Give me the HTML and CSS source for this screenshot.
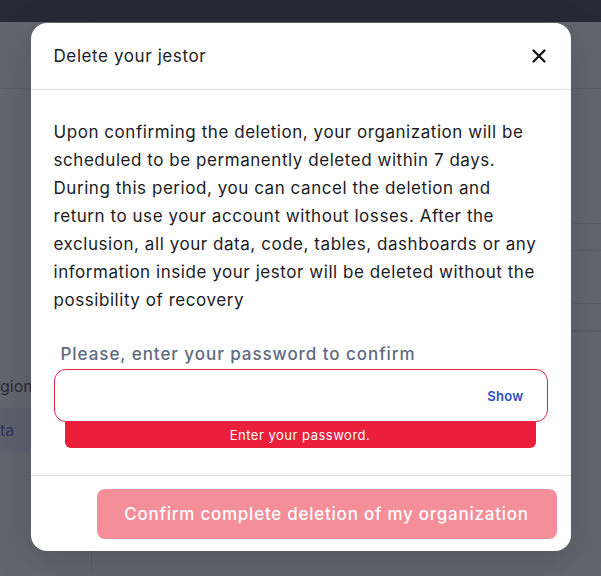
FILE: index.html
```html
<!DOCTYPE html>
<html>
<head>
<meta charset="utf-8">
<link rel="stylesheet" href="styles.css">
</head>
<body>
<div class="app">
  <div class="topbar"></div>
  <div class="main">
    <div class="side">
      <div class="side-head"></div>
      <div class="side-list">
        <div class="side-item">gion</div>
        <div class="side-item active">ta</div>
      </div>
    </div>
    <div class="content">
      <div class="content-head"></div>
      <div class="rows">
        <div class="row r1"></div>
        <div class="row r2"></div>
        <div class="row r3"></div>
        <div class="row r4"></div>
        <div class="row r5"></div>
      </div>
    </div>
  </div>
</div>
<div class="overlay">
  <div class="modal">
    <div class="modal-head">
      <h2 class="title">Delete your jestor</h2>
      <button class="close" aria-label="Close">
        <svg width="14" height="14" viewBox="0 0 14 14"><path d="M1.5 1.5 L12.5 12.5 M12.5 1.5 L1.5 12.5" stroke="#111" stroke-width="2.2" stroke-linecap="round"/></svg>
      </button>
    </div>
    <div class="modal-body">
      <p class="desc">Upon confirming the deletion, your organization will be scheduled to be permanently deleted within 7 days. During this period, you can cancel the deletion and return to use your account without losses. After the exclusion, all your data, code, tables, dashboards or any information inside your jestor will be deleted without the possibility of recovery</p>
      <label class="label">Please, enter your password to confirm</label>
      <div class="field">
        <input class="input" type="password">
        <span class="show">Show</span>
      </div>
      <div class="error">Enter your password.</div>
    </div>
    <div class="modal-foot">
      <button class="confirm">Confirm complete deletion of my organization</button>
    </div>
  </div>
</div>
</body>
</html>
```
FILE: styles.css
```css
* { box-sizing: border-box; }
html, body { margin: 0; padding: 0; }
body {
  width: 601px;
  height: 576px;
  overflow: hidden;
  font-family: "Inter", "Noto Sans", sans-serif;
  position: relative;
  background: #fff;
}
.app { display: flex; flex-direction: column; height: 576px; }
.topbar { height: 22px; background: #2b2e38; flex: none; }
.main { flex: 1; display: flex; }
.side { width: 92px; border-right: 1px solid #e2e4ea; display: flex; flex-direction: column; }
.side-head { height: 67px; border-bottom: 1px solid #e2e4ea; }
.side-list { padding-top: 275px; }
.side-item { height: 44px; line-height: 44px; color: #2f3442; font-size: 16px; white-space: nowrap; }
.side-item.active { color: #3352c4; background: #eef1fb; }
.content { flex: 1; }
.content-head { height: 67px; border-bottom: 1px solid #e2e4ea; }
.rows { padding-top: 81px; }
.row { border-bottom: 1px solid #e2e4ea; }
.r1 { height: 54px; }
.r2 { height: 27px; }
.r3 { height: 53px; }
.r4 { height: 27px; }
.r5 { height: 0; }

.overlay {
  position: absolute;
  inset: 0;
  background: rgba(38, 42, 54, 0.72);
  display: flex;
  justify-content: center;
  padding-top: 23px;
}
.modal {
  width: 540px;
  height: 528px;
  background: #fff;
  border-radius: 16px;
  display: flex;
  flex-direction: column;
  box-shadow: 0 10px 40px rgba(0,0,0,0.15);
}
.modal-head {
  height: 67px;
  border-bottom: 1px solid #e1e0ea;
  display: flex;
  align-items: center;
  justify-content: space-between;
  padding: 0 22px 0 23px;
}
.title { margin: 0; font-size: 17px; font-weight: 400; color: #1b1b1f; letter-spacing: 0.6px; }
.close { border: 0; background: none; padding: 0; width: 20px; height: 20px; display: flex; align-items: center; justify-content: center; cursor: pointer; }
.modal-body {
  flex: 1;
  padding: 28px 23px 0 23px;
  border-bottom: 1px solid #e1e0ea;
  display: flex;
  flex-direction: column;
}
.desc { margin: 0; font-size: 17px; line-height: 28px; color: #1b1b1f; letter-spacing: 0.55px; }
.label { margin-top: 30px; padding-left: 7px; font-size: 17px; font-weight: 500; color: #5f6a80; letter-spacing: 0.95px; }
.field {
  margin-top: 5px;
  height: 53px;
  border: 1px solid #e0273f;
  border-radius: 12px;
  display: flex;
  align-items: center;
  padding: 0 23px 0 12px;
}
.input { flex: 1; border: 0; outline: none; height: 100%; font-size: 16px; background: transparent; }
.show { color: #2a4fc0; font-size: 13px; font-weight: 600; letter-spacing: 0.3px; }
.error {
  margin: 0 12px 0 11px;
  height: 26px;
  background: #ec1f3a;
  border-radius: 0 0 6px 6px;
  color: #fff;
  font-size: 13px;
  text-align: center;
  line-height: 26px;
  letter-spacing: 0.5px;
}
.modal-foot {
  height: 75px;
  display: flex;
  justify-content: flex-end;
  align-items: flex-start;
  padding: 13px 14px 0 0;
}
.confirm {
  width: 460px;
  height: 50px;
  border: 0;
  border-radius: 8px;
  background: #f48e99;
  color: #fff;
  font-family: inherit;
  font-size: 17px;
  font-weight: 500;
  letter-spacing: 0.75px;
}
```
